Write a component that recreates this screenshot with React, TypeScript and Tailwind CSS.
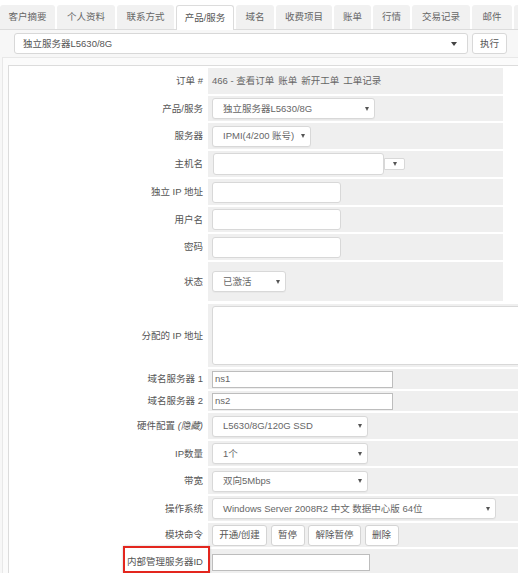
import React from "react";

const FONT = "font-['Liberation_Sans','Noto_Sans_CJK_SC',sans-serif]";

function Caret({ big = false }: { big?: boolean }) {
  return big ? (
    <span className="inline-block w-0 h-0 border-x-[3.5px] border-t-[4px] border-x-transparent border-t-[#444]" />
  ) : (
    <span className="inline-block w-0 h-0 border-x-[2.5px] border-t-[4px] border-x-transparent border-t-[#555]" />
  );
}

function Select({ w, text }: { w: string; text: string }) {
  return (
    <div
      className={`${w} h-[21px] flex items-center justify-between bg-white border border-[#d8d8d8] rounded-[3px] pl-[10px] pr-[5px] text-[#666] shadow-[0_1px_1px_rgba(0,0,0,0.03)]`}
    >
      <span className="whitespace-nowrap">{text}</span>
      <Caret />
    </div>
  );
}

function TextInput({ w }: { w: string }) {
  return <div className={`${w} h-[21px] bg-white border border-[#d8d8d8] rounded-[3px]`} />;
}

function PlainInput({ w, text = "" }: { w: string; text?: string }) {
  return (
    <div className={`${w} h-[17px] bg-white border border-[#bdbdbd] flex items-center pl-[2px] text-[#666]`}>
      {text}
    </div>
  );
}

function Btn({ w, text }: { w: string; text: string }) {
  return (
    <div className={`${w} h-[21px] flex items-center justify-center bg-white border border-[#d4d4d4] rounded-[3px] text-[#555]`}>
      {text}
    </div>
  );
}

function Row({
  label,
  h,
  wide = false,
  children,
  mark = false,
}: {
  label: React.ReactNode;
  h: string;
  wide?: boolean;
  children?: React.ReactNode;
  mark?: boolean;
}) {
  return (
    <div className={`flex ${h}`}>
      <div className="relative w-[199px] shrink-0 flex items-center justify-end pr-[5px] text-[#555] whitespace-nowrap">
        {label}
        {mark && (
          <div className="absolute right-[-2px] top-[-3px] w-[87px] h-[27px] border-2 border-[#e3261e] shadow-[0_0_2px_rgba(0,0,0,0.25)]" />
        )}
      </div>
      <div className={`${wide ? "flex-1" : "w-[295px]"} bg-[#efefef] flex items-center pl-[4px]`}>{children}</div>
    </div>
  );
}

const tabs: [string, string][] = [
  ["客户摘要", "w-[55px]"],
  ["个人资料", "w-[58px]"],
  ["联系方式", "w-[57px]"],
  ["产品/服务", "w-[58px]"],
  ["域名", "w-[38px]"],
  ["收费项目", "w-[56px]"],
  ["账单", "w-[37px]"],
  ["行情", "w-[37px]"],
  ["交易记录", "w-[58px]"],
  ["邮件", "w-[40px]"],
  ["", "w-[30px]"],
];

export default function App() {
  return (
    <div className={`w-[518px] h-[573px] overflow-hidden bg-white text-[9.5px] leading-none ${FONT}`}>
      {/* tabs */}
      <div className="flex gap-[2px] pt-[4px] h-[29px] items-end">
        {tabs.map(([t, w], i) =>
          i === 3 ? (
            <div
              key={i}
              className={`${w} shrink-0 h-[25px] -mb-px relative z-10 flex items-center justify-center bg-white border border-b-0 border-[#dcdcdc] rounded-t-[3px] text-[#555]`}
            >
              {t}
            </div>
          ) : (
            <div
              key={i}
              className={`${w} shrink-0 h-[24px] flex items-center justify-center bg-[#f1f1f1] rounded-t-[3px] text-[#666]`}
            >
              {t}
            </div>
          )
        )}
      </div>

      {/* content */}
      <div className="bg-[#f7f7f7] border-t border-[#dcdcdc] h-[544px]">
        <div className="flex items-center gap-[4px] pl-[14px] pt-[3px]">
          <div className="w-[454px] h-[21px] flex items-center justify-between bg-white border border-[#d8d8d8] rounded-[3px] pl-[8px] pr-[10px] text-[#555]">
            <span>独立服务器L5630/8G</span>
            <Caret big />
          </div>
          <div className="w-[35px] h-[21px] flex items-center justify-center bg-white border border-[#d8d8d8] rounded-[3px] text-[#555]">
            执行
          </div>
        </div>

        <div className="mt-[3px] ml-[2px] border-l border-t border-[#e8e8e8] bg-[#fbfbfb] pl-[5px] pt-[7px] h-[520px]">
          <div className="w-[530px] h-[520px] bg-white border-l border-t border-[#dcdcdc] pt-[2px] flex flex-col gap-[2px]">
            <Row label="订单 #" h="h-[26px]">
              <span className="text-[#666] whitespace-nowrap">
                466 - 查看订单<span className="ml-[4px]">账单</span>
                <span className="ml-[4px]">新开工单</span>
                <span className="ml-[4px]">工单记录</span>
              </span>
            </Row>
            <Row label="产品/服务" h="h-[25px]">
              <Select w="w-[163px]" text="独立服务器L5630/8G" />
            </Row>
            <Row label="服务器" h="h-[26px]">
              <Select w="w-[99px]" text="IPMI(4/200 账号)" />
            </Row>
            <Row label="主机名" h="h-[26px]">
              <div className="flex items-center">
                <div className="w-[171px] h-[22px] ml-[1px] bg-white border border-[#d8d8d8] rounded-[3px]" />
                <div className="w-[21px] h-[12px] bg-white border border-[#d8d8d8] rounded-r-[2px] flex items-center justify-center">
                  <Caret />
                </div>
              </div>
            </Row>
            <Row label="独立 IP 地址" h="h-[26px]">
              <TextInput w="w-[129px]" />
            </Row>
            <Row label="用户名" h="h-[25px]">
              <TextInput w="w-[129px]" />
            </Row>
            <Row label="密码" h="h-[26px]">
              <TextInput w="w-[129px]" />
            </Row>
            <Row label="状态" h="h-[39px]">
              <Select w="w-[74px]" text="已激活" />
            </Row>
            <div className="flex flex-col gap-[2px] mt-[1px]">
              <Row label="分配的 IP 地址" h="h-[63px]" wide>
                <div className="w-[320px] h-[59px] shrink-0 bg-white border border-[#d8d8d8] rounded-[3px]" />
              </Row>
              <Row label="域名服务器 1" h="h-[20px]" wide>
                <PlainInput w="w-[181px]" text="ns1" />
              </Row>
              <Row label="域名服务器 2" h="h-[20px]" wide>
                <PlainInput w="w-[181px]" text="ns2" />
              </Row>
              <Row
                label={
                  <span>
                    硬件配置 <i>(隐藏)</i>
                  </span>
                }
                h="h-[26px]"
                wide
              >
                <Select w="w-[156px]" text="L5630/8G/120G SSD" />
              </Row>
              <Row label="IP数量" h="h-[25px]" wide>
                <Select w="w-[156px]" text="1个" />
              </Row>
              <Row label="带宽" h="h-[26px]" wide>
                <Select w="w-[156px]" text="双向5Mbps" />
              </Row>
              <Row label="操作系统" h="h-[25px]" wide>
                <Select w="w-[284px]" text="Windows Server 2008R2 中文 数据中心版 64位" />
              </Row>
              <Row label="模块命令" h="h-[24px]" wide>
                <div className="flex gap-[3.5px]">
                  <Btn w="w-[55px]" text="开通/创建" />
                  <Btn w="w-[34px]" text="暂停" />
                  <Btn w="w-[53px]" text="解除暂停" />
                  <Btn w="w-[34px]" text="删除" />
                </div>
              </Row>
              <Row label="内部管理服务器ID" h="h-[26px]" wide mark>
                <PlainInput w="w-[158px]" />
              </Row>
            </div>
          </div>
        </div>
      </div>
    </div>
  );
}
